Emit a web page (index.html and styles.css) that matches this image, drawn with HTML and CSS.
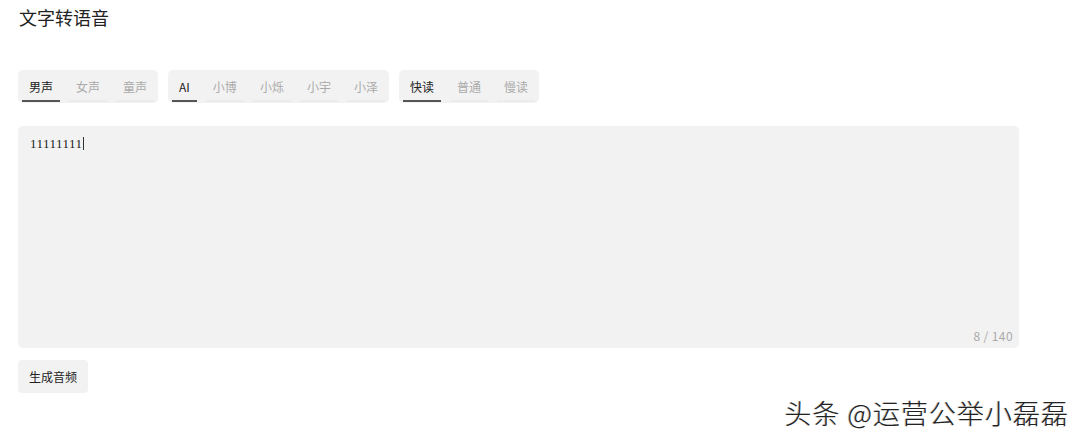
FILE: index.html
```html
<!DOCTYPE html>
<html>
<head>
  <meta charset="utf-8">
  <title>文字转语音</title>
  <link rel="stylesheet" href="styles.css">
</head>
<body>
  <div id="page">
    <h1 class="title">文字转语音</h1>
    <div class="options">
      <div class="group">
        <span class="tab on">男声</span>
        <span class="tab">女声</span>
        <span class="tab">童声</span>
      </div>
      <div class="group">
        <span class="tab on">AI</span>
        <span class="tab">小博</span>
        <span class="tab">小烁</span>
        <span class="tab">小宇</span>
        <span class="tab">小泽</span>
      </div>
      <div class="group">
        <span class="tab on">快读</span>
        <span class="tab">普通</span>
        <span class="tab">慢读</span>
      </div>
    </div>
    <div class="editor">
      <div class="text">11111111<i class="caret"></i></div>
      <div class="count">8 / 140</div>
    </div>
    <a href="javascript:;" class="btn">生成音频</a>
  </div>
  <div class="mark">头条 @运营公举小磊磊</div>
</body>
</html>
```

FILE: styles.css
```css
html, body{
  margin: 0;
  background: #fff;
}
body{
  font-family: "Noto Sans CJK SC", "Noto Sans", sans-serif;
  color: #333;
}
#page{
  padding: 5px 18px 0 18px;
  width: 1001px;
}
.title{
  margin: 0;
  font-size: 18px;
  font-weight: normal;
  line-height: 24px;
  padding-left: 1px;
  color: #222;
}
.options{
  display: flex;
  gap: 10px;
  margin-top: 41px;
}
.group{
  display: flex;
  gap: 9px;
  padding: 0 4px;
  height: 33px;
  background: #f2f2f2;
  border-radius: 5px;
}
.tab{
  display: flex;
  align-items: center;
  padding: 2px 7px 0 7px;
  font-size: 12px;
  color: #aaa;
  border-bottom: 2px solid #ececec;
  margin-bottom: 1px;
  cursor: pointer;
}
.tab.on{
  color: #222;
  border-bottom-color: #555;
}
.editor{
  display: flex;
  flex-direction: column;
  justify-content: space-between;
  margin-top: 23px;
  height: 222px;
  background: #f2f2f2;
  border-radius: 5px;
  padding: 10px 6px 4px 12px;
  box-sizing: border-box;
}
.text{
  font-family: "Liberation Serif", serif;
  font-size: 13px;
  letter-spacing: 0.5px;
  color: #222;
  line-height: 16px;
}
.caret{
  display: inline-block;
  width: 1px;
  height: 13px;
  background: #333;
  vertical-align: -2px;
}
.count{
  align-self: flex-end;
  font-size: 12px;
  letter-spacing: 0.4px;
  color: #aaa;
}
.btn{
  display: inline-block;
  margin-top: 12px;
  padding: 0 11px;
  line-height: 33px;
  font-size: 12px;
  color: #222;
  text-decoration: none;
  background: #f2f2f2;
  border-radius: 4px;
}
.mark{
  position: absolute;
  right: 11px;
  top: 393px;
  font-size: 27px;
  font-weight: 300;
  color: #222;
  letter-spacing: 1px;
  text-shadow: 1px 1px 0 #fff, -1px 0 0 #bbb;
}
```
